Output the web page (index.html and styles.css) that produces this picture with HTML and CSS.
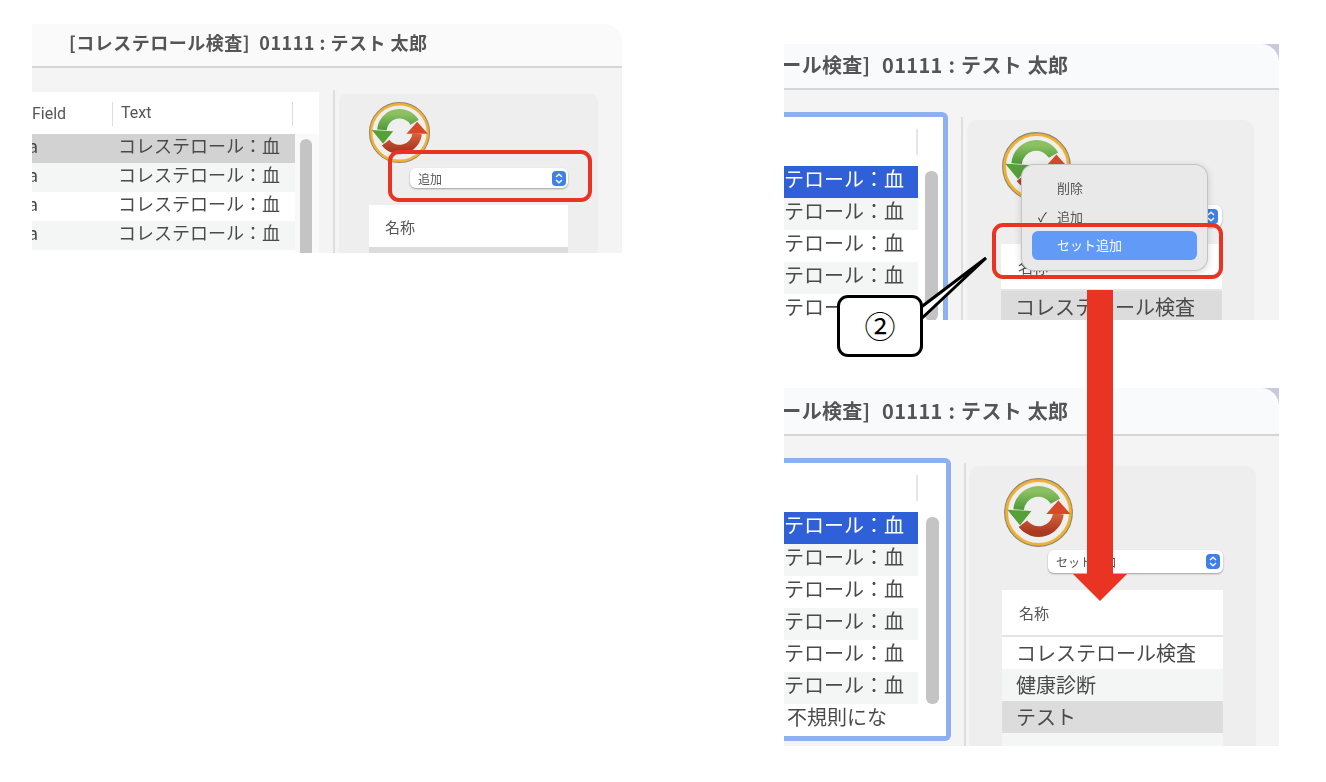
FILE: index.html
```html
<!DOCTYPE html>
<html lang="ja">
<head>
    <meta charset="UTF-8">
    <title>セット追加の手順</title>
    <link rel="stylesheet" href="styles.css">
</head>
<body>
    <!-- shared refresh icon -->
    <svg class="defs" width="0" height="0">
        <defs>
            <linearGradient id="greenFill" x1="0" y1="0" x2="0" y2="1">
                <stop offset="0" stop-color="#8cc063"/>
                <stop offset="1" stop-color="#4c9a34"/>
            </linearGradient>
            <linearGradient id="redFill" x1="0" y1="0" x2="0" y2="1">
                <stop offset="0" stop-color="#d9603a"/>
                <stop offset="1" stop-color="#a93a22"/>
            </linearGradient>
            <symbol id="refresh" viewBox="0 0 100 100">
                <circle cx="50" cy="50" r="47" fill="#f2f2f0" stroke="#8a8678" stroke-width="3"/>
                <circle cx="50" cy="50" r="45" fill="#efefef" stroke="#eeb133" stroke-width="4"/>
                <path d="M74 34 A28 28 0 0 0 22 46" fill="none" stroke="url(#greenFill)" stroke-width="15"/>
                <polygon points="6,46 40,48 24,68" fill="#56a03a"/>
                <path d="M28 66 A28 28 0 0 0 78 52" fill="none" stroke="url(#redFill)" stroke-width="15"/>
                <polygon points="61,52 78,33 95,52" fill="#d8492a"/>
            </symbol>
            <symbol id="updown" viewBox="0 0 14 15">
                <rect width="14" height="15" rx="4" fill="#3f7fe8"/>
                <path d="M4 6 L7 3.2 L10 6 M4 9 L7 11.8 L10 9" fill="none" stroke="#fff" stroke-width="1.4"/>
            </symbol>
        </defs>
    </svg>

    <div class="canvas">

        <!-- Step 1 -->
        <div class="win win-one">
            <div class="titlebar"><span class="title">[コレステロール検査]&nbsp; 01111 : テスト 太郎</span></div>
            <div class="body">
                <div class="list">
                    <div class="list-head">
                        <div class="col-field">Field</div>
                        <div class="col-text">Text</div>
                    </div>
                    <div class="list-main">
                        <div class="rows">
                            <div class="row picked"><span class="col-a">a</span><span>コレステロール：血</span></div>
                            <div class="row alt"><span class="col-a">a</span><span>コレステロール：血</span></div>
                            <div class="row"><span class="col-a">a</span><span>コレステロール：血</span></div>
                            <div class="row alt"><span class="col-a">a</span><span>コレステロール：血</span></div>
                        </div>
                        <div class="scroll"><div class="thumb"></div></div>
                    </div>
                </div>
                <div class="divider"></div>
                <div class="panel">
                    <svg class="icon"><use href="#refresh"/></svg>
                    <div class="select"><span>追加</span><svg class="updown"><use href="#updown"/></svg></div>
                    <div class="names">
                        <div class="names-head">名称</div>
                        <div class="name picked"></div>
                    </div>
                </div>
            </div>
        </div>

        <!-- Step 2 -->
        <div class="win win-two">
            <div class="titlebar"><span class="title">[コレステロール検査]&nbsp; 01111 : テスト 太郎</span></div>
            <div class="body">
                <div class="list focus">
                    <div class="list-head"><div class="col-blank"></div></div>
                    <div class="list-main">
                        <div class="rows">
                            <div class="row chosen"><span>コレステロール：血</span></div>
                            <div class="row alt"><span>コレステロール：血</span></div>
                            <div class="row"><span>コレステロール：血</span></div>
                            <div class="row alt"><span>コレステロール：血</span></div>
                            <div class="row"><span>コレステロール：血</span></div>
                        </div>
                        <div class="scroll"><div class="thumb"></div></div>
                    </div>
                </div>
                <div class="divider"></div>
                <div class="panel">
                    <svg class="icon"><use href="#refresh"/></svg>
                    <div class="select"><span>追加</span><svg class="updown"><use href="#updown"/></svg></div>
                    <div class="names">
                        <div class="names-head">名称</div>
                        <div class="name picked">コレステロール検査</div>
                    </div>
                </div>
            </div>
            <div class="menu">
                <div class="menu-item">削除</div>
                <div class="menu-item checked">追加</div>
                <div class="menu-item active">セット追加</div>
            </div>
        </div>

        <!-- Step 3 -->
        <div class="win win-three">
            <div class="titlebar"><span class="title">[コレステロール検査]&nbsp; 01111 : テスト 太郎</span></div>
            <div class="body">
                <div class="list focus">
                    <div class="list-head"><div class="col-blank"></div></div>
                    <div class="list-main">
                        <div class="rows">
                            <div class="row chosen"><span>コレステロール：血</span></div>
                            <div class="row alt"><span>コレステロール：血</span></div>
                            <div class="row"><span>コレステロール：血</span></div>
                            <div class="row alt"><span>コレステロール：血</span></div>
                            <div class="row"><span>コレステロール：血</span></div>
                            <div class="row alt"><span>コレステロール：血</span></div>
                            <div class="row last"><span>不規則にな</span></div>
                        </div>
                        <div class="scroll"><div class="thumb"></div></div>
                    </div>
                </div>
                <div class="divider"></div>
                <div class="panel">
                    <svg class="icon"><use href="#refresh"/></svg>
                    <div class="select"><span>セット追加</span><svg class="updown"><use href="#updown"/></svg></div>
                    <div class="names">
                        <div class="names-head">名称</div>
                        <div class="name">コレステロール検査</div>
                        <div class="name alt">健康診断</div>
                        <div class="name picked">テスト</div>
                        <div class="name alt"></div>
                    </div>
                </div>
            </div>
        </div>

        <!-- Annotations -->
        <div class="mark mark-one"></div>
        <div class="mark mark-two"></div>

        <svg class="arrow" viewBox="0 0 54 311">
            <polygon points="14,0 40,0 40,284 54,284 27,311 0,284 14,284" fill="#e93323"/>
        </svg>

        <svg class="tail" viewBox="0 0 70 70">
            <polygon points="0,52 66,2 0,64" fill="#fff" stroke="#000" stroke-width="3"/>
        </svg>
        <div class="callout">②</div>
    </div>
</body>
</html>
```

FILE: styles.css
```css
body { margin: 0; background: #fff; font-family: "Noto Sans CJK JP", "Noto Sans", sans-serif; color: #444; }
.defs { display: block; height: 0; }
.canvas { position: relative; width: 1326px; height: 782px; overflow: hidden; }

/* cropped app windows, placed freely on the sheet */
.win { position: absolute; overflow: hidden; background: linear-gradient(#fff 0 18px, #f4f4f4 18px); filter: blur(0.4px); }
.win-one { left: 32px; top: 24px; width: 590px; height: 229px; }
.win-two { left: 784px; top: 44px; width: 495px; height: 276px; background: linear-gradient(#c8c8de 0 18px, #f4f4f4 18px); }
.win-three { left: 784px; top: 388px; width: 495px; height: 358px; background: linear-gradient(#c8c8de 0 18px, #f4f4f4 18px); }

.titlebar { height: 42px; background: #fafafa; border-bottom: 2px solid #d6d6d6; border-top-right-radius: 18px; display: flex; align-items: center; overflow: hidden; white-space: nowrap; }
.win-two .titlebar { height: 44px; background: #f9fafc; }
.win-three .titlebar { height: 46px; background: #f9fafc; }
.title { font-size: 18px; font-weight: 700; letter-spacing: 0.5px; color: #555; margin: -7px 0 0 37px; }
.win-two .title, .win-three .title { font-size: 20px; letter-spacing: 0.3px; margin: -3px 0 0 -112px; word-spacing: 1px; }
.win-three .title { margin-top: -2px; }

.body { display: flex; align-items: flex-start; padding-top: 24px; }
.win-two .body { padding-top: 22px; }
.win-three .body { padding-top: 22px; }

/* left table */
.list { width: 287px; flex: none; background: #fff; box-sizing: border-box; }
.list.focus { width: 164px; border: solid #8fb0f0; border-width: 5px 5px 5px 0; border-radius: 0 6px 6px 0; height: 260px; }
.win-three .list.focus { width: 167px; height: 283px; }
.list-head { height: 42px; display: flex; align-items: center; font: 16px/22px Roboto, "Noto Sans", sans-serif; color: #555; padding-top: 1px; box-sizing: border-box; }
.focus .list-head { height: 49px; padding-top: 0; }
.col-field { width: 80px; }
.col-text { width: 171px; padding-left: 8px; border-left: 1px solid #ddd; border-right: 1px solid #ddd; height: 24px; }
.col-blank { width: 132px; height: 26px; border-right: 2px solid #e6e6e6; }

.list-main { display: flex; }
.rows { width: 263px; flex: none; }
.focus .rows { width: 134px; overflow: hidden; }
.row { height: 29px; display: flex; font-size: 18px; line-height: 22px; white-space: nowrap; color: #4a4a4a; }
.focus .row { height: 32px; font-size: 20px; line-height: 26px; }
.focus .row span { margin-left: -60px; }
.focus .row.last span { margin-left: 3px; }
.col-a { width: 86px; text-indent: -4px; }
.row.picked { background: #d2d2d2; }
.row.alt { background: #f4f5f5; }
.row.chosen { background: #2f60d8; color: #fff; }
.scroll { flex: 1; padding: 5px 7px 0 5px; background: #f9f9f9; }
.focus .scroll { background: #fff; padding: 5px 0 0 7px; }
.win-three .scroll { padding-left: 8px; }
.thumb { width: 12px; height: 140px; border-radius: 6px; background: #c4c4c4; }
.focus .thumb { width: 13px; height: 150px; }
.win-three .thumb { height: 187px; }

.divider { width: 2px; height: 320px; flex: none; margin: -2px 4px 0 14px; background: #dedede; }
.win-two .divider { margin: 5px 4px 0 13px; }
.win-three .divider { margin: 5px 3px 0 13px; }

/* right panel */
.panel { width: 259px; height: 300px; flex: none; box-sizing: border-box; margin-top: 2px; padding: 7px 30px 0; background: #eee; border-radius: 8px; display: flex; flex-direction: column; }
.win-two .panel, .win-three .panel { width: 287px; height: 400px; padding: 11px 32px 0 34px; margin-top: 8px; border-radius: 10px; }
.win-three .panel { padding: 11px 33px 0; }
.icon { width: 63px; height: 63px; flex: none; margin-left: -1px; }
.win-two .icon { width: 71px; height: 71px; margin-left: 0; }
.win-three .icon { width: 71px; height: 71px; margin-left: 1px; }
.select { align-self: flex-end; width: 158px; height: 20px; margin-top: 4px; box-sizing: border-box; padding: 0 2px 0 8px; display: flex; align-items: center; justify-content: space-between; background: #fff; border-radius: 6px; box-shadow: 0 1px 2px #0005; font-size: 12px; color: #555; }
.win-two .select { width: 174px; height: 22px; margin-top: 3px; padding-right: 4px; }
.win-three .select { width: 175px; height: 23px; margin-top: 2px; padding-right: 3px; }
.names { margin-top: 17px; background: #fff; }
.updown { width: 14px; height: 15px; flex: none; }
.names-head { height: 42px; padding-left: 16px; font-size: 15px; line-height: 44px; color: #555; box-sizing: border-box; }
.win-two .names-head, .win-three .names-head { height: 47px; padding-left: 17px; line-height: 45px; border-bottom: 2px solid #e4e4e4; }
.name { height: 32px; padding-left: 14px; font-size: 20px; line-height: 31px; white-space: nowrap; color: #4a4a4a; }
.name.picked { background: #dcdcdc; }
.name.alt { background: #f4f5f5; }

/* popup menu */
.menu { position: absolute; left: 238px; top: 121px; width: 185px; height: 105px; box-sizing: border-box; padding: 9px 10px; background: #e9e9e9; border-radius: 12px; box-shadow: 0 0 0 1px #c4c4c4, 0 2px 8px #0003; font-size: 13px; color: #555; }
.menu-item { height: 28.5px; padding-left: 25px; line-height: 27px; position: relative; border-radius: 6px; }
.menu-item.checked::before { content: "✓"; position: absolute; left: 6px; color: #333; }
.menu-item.active { background: #619bf7; color: #fff; }

/* red annotations */
.mark { position: absolute; box-sizing: border-box; border: 4px solid #e93323; border-radius: 11px; }
.mark-one { left: 388px; top: 150px; width: 204px; height: 52px; }
.mark-two { left: 992px; top: 223px; width: 231px; height: 56px; }
.arrow { position: absolute; left: 1073px; top: 290px; width: 54px; height: 311px; }

.tail { position: absolute; left: 920px; top: 256px; width: 70px; height: 70px; }
.callout { position: absolute; left: 837px; top: 295px; width: 86px; height: 62px; box-sizing: border-box; border: 3px solid #000; border-radius: 11px; background: #fff; color: #000; font-size: 31px; line-height: 54px; text-align: center; }
```
